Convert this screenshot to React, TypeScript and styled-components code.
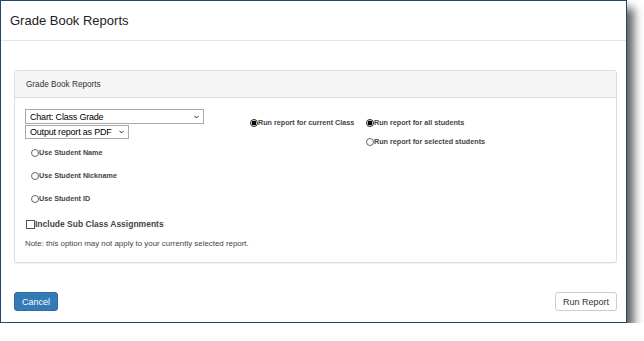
import React from "react";
import styled, { createGlobalStyle } from "styled-components";

const Global = createGlobalStyle`
  html, body { margin: 0; padding: 0; background: #ffffff; }
  body { font-family: "Liberation Sans", Arial, sans-serif; color: #333; }
  * { box-sizing: border-box; }
`;

const Frame = styled.div`
  width: 627px;
  height: 323px;
  border: 1px solid #23446e;
  background: #fff;
  box-shadow: 7px 8px 9px rgba(0, 0, 0, 0.62);
  display: flex;
  flex-direction: column;
`;

const Header = styled.div`
  height: 40px;
  border-bottom: 1px solid #e5e5e5;
  display: flex;
  align-items: center;
  padding-left: 9px;
  font-size: 13px;
  color: #222;
`;

const Body = styled.div`
  padding: 29px 9px 0 13px;
`;

const Panel = styled.div`
  border: 1px solid #dddddd;
  border-radius: 3px;
  box-shadow: 0 1px 1px rgba(0, 0, 0, 0.05);
`;

const PanelHeading = styled.div`
  height: 27px;
  background: #f5f5f5;
  border-bottom: 1px solid #dddddd;
  display: flex;
  align-items: center;
  padding-left: 11px;
  font-size: 8.2px;
  color: #333;
`;

const PanelBody = styled.div`
  display: flex;
  padding: 11px 10px 14px 10px;
`;

const LeftCol = styled.div`
  width: 225px;
  display: flex;
  flex-direction: column;
  align-items: flex-start;
`;

const MidCol = styled.div`
  width: 116px;
  padding-top: 10px;
`;

const RightCol = styled.div`
  padding-top: 10px;
  display: flex;
  flex-direction: column;
  gap: 11px;
`;

const SelectBox = styled.div<{ $w: number; $h: number }>`
  width: ${(p) => p.$w}px;
  height: ${(p) => p.$h}px;
  border: 1px solid #a9a9a9;
  background: #fff;
  display: flex;
  align-items: center;
  justify-content: space-between;
  padding: 0 4px 0 4px;
  font-size: 9px;
  color: #000;
  letter-spacing: -0.2px;
`;

const Chevron = () => (
  <svg width="5" height="4" viewBox="0 0 5 4">
    <path d="M0.5 0.8 L2.5 3 L4.5 0.8" fill="none" stroke="#333" strokeWidth="1" />
  </svg>
);

const RadioList = styled.div`
  display: flex;
  flex-direction: column;
  gap: 15px;
  margin-top: 10px;
  padding-left: 6px;
`;

const OptionRow = styled.div`
  display: flex;
  align-items: center;
  height: 8px;
`;

const Radio = styled.span<{ $checked?: boolean }>`
  width: 8px;
  height: 8px;
  border-radius: 50%;
  border: 1px solid ${(p) => (p.$checked ? "#222" : "#666")};
  background: ${(p) =>
    p.$checked
      ? "radial-gradient(circle, #000 0 2.2px, #fff 2.6px)"
      : "#fff"};
  flex: none;
`;

const OptionLabel = styled.span`
  font-size: 7.2px;
  font-weight: bold;
  color: #444;
  white-space: nowrap;
  line-height: 8px;
`;

const CheckRow = styled.div`
  display: flex;
  align-items: center;
  margin-top: 16px;
  padding-left: 1px;
`;

const Checkbox = styled.span`
  width: 9px;
  height: 9px;
  border: 1px solid #555;
  background: #fff;
  flex: none;
`;

const CheckLabel = styled.span`
  font-size: 8.5px;
  font-weight: bold;
  color: #444;
  white-space: nowrap;
`;

const Note = styled.div`
  margin-top: 11px;
  font-size: 7.9px;
  line-height: 8px;
  color: #444;
  white-space: nowrap;
`;

const Footer = styled.div`
  margin-top: auto;
  padding: 0 9px 11px 13px;
  display: flex;
  justify-content: space-between;
`;

const Button = styled.button<{ $primary?: boolean }>`
  height: 19px;
  padding: 0 7px;
  font-family: "Liberation Sans", Arial, sans-serif;
  font-size: 9px;
  border-radius: 3px;
  border: 1px solid ${(p) => (p.$primary ? "#2e6da4" : "#cccccc")};
  background: ${(p) => (p.$primary ? "#337ab7" : "#ffffff")};
  color: ${(p) => (p.$primary ? "#ffffff" : "#333333")};
  cursor: pointer;
`;

export default function App() {
  return (
    <>
      <Global />
      <Frame>
        <Header>Grade Book Reports</Header>
        <Body>
          <Panel>
            <PanelHeading>Grade Book Reports</PanelHeading>
            <PanelBody>
              <LeftCol>
                <SelectBox $w={179} $h={15}>
                  <span>Chart: Class Grade</span>
                  <Chevron />
                </SelectBox>
                <SelectBox $w={104} $h={14} style={{ marginTop: 1 }}>
                  <span>Output report as PDF</span>
                  <Chevron />
                </SelectBox>
                <RadioList>
                  <OptionRow>
                    <Radio />
                    <OptionLabel>Use Student Name</OptionLabel>
                  </OptionRow>
                  <OptionRow>
                    <Radio />
                    <OptionLabel>Use Student Nickname</OptionLabel>
                  </OptionRow>
                  <OptionRow>
                    <Radio />
                    <OptionLabel>Use Student ID</OptionLabel>
                  </OptionRow>
                </RadioList>
                <CheckRow>
                  <Checkbox />
                  <CheckLabel>Include Sub Class Assignments</CheckLabel>
                </CheckRow>
                <Note>Note: this option may not apply to your currently selected report.</Note>
              </LeftCol>
              <MidCol>
                <OptionRow>
                  <Radio $checked />
                  <OptionLabel>Run report for current Class</OptionLabel>
                </OptionRow>
              </MidCol>
              <RightCol>
                <OptionRow>
                  <Radio $checked />
                  <OptionLabel>Run report for all students</OptionLabel>
                </OptionRow>
                <OptionRow>
                  <Radio />
                  <OptionLabel>Run report for selected students</OptionLabel>
                </OptionRow>
              </RightCol>
            </PanelBody>
          </Panel>
        </Body>
        <Footer>
          <Button $primary>Cancel</Button>
          <Button>Run Report</Button>
        </Footer>
      </Frame>
    </>
  );
}
